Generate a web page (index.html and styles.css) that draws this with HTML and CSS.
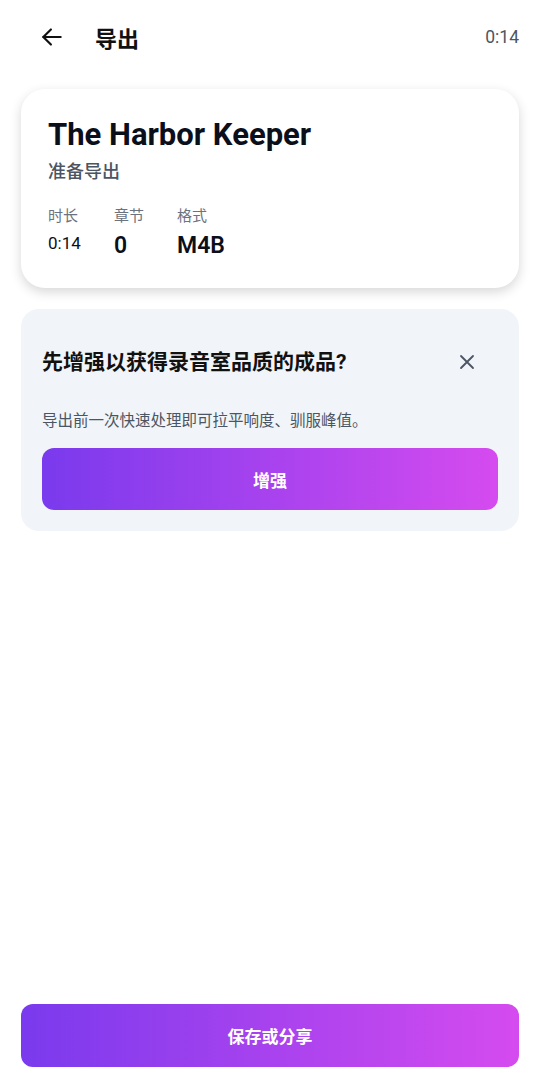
FILE: index.html
```html
<!DOCTYPE html>
<html lang="zh">
<head>
  <meta charset="UTF-8">
  <title>导出</title>
  <link rel="stylesheet" href="styles.css">
</head>
<body>
  <div class="screen">

    <div class="topbar">
      <button class="back" aria-label="返回">
        <svg width="26" height="26" viewBox="0 0 24 24" fill="none" stroke="#111" stroke-width="2" stroke-linecap="round" stroke-linejoin="round">
          <path d="M20 12H4"/>
          <path d="M11 5l-7 7 7 7"/>
        </svg>
      </button>
      <h1>导出</h1>
      <span class="time">0:14</span>
    </div>

    <div class="card summary">
      <h2>The Harbor Keeper</h2>
      <div class="status">准备导出</div>
      <div class="stats">
        <div class="stat">
          <div class="label">时长</div>
          <div class="value plain">0:14</div>
        </div>
        <div class="stat">
          <div class="label">章节</div>
          <div class="value">0</div>
        </div>
        <div class="stat">
          <div class="label">格式</div>
          <div class="value">M4B</div>
        </div>
      </div>
    </div>

    <div class="card promo">
      <div class="promo-head">
        <h3>先增强以获得录音室品质的成品?</h3>
        <button class="close" aria-label="关闭">
          <svg width="18" height="18" viewBox="0 0 18 18" fill="none" stroke="#4b5563" stroke-width="1.8" stroke-linecap="round">
            <path d="M3 3l12 12M15 3L3 15"/>
          </svg>
        </button>
      </div>
      <p>导出前一次快速处理即可拉平响度、驯服峰值。</p>
      <button class="grad-btn">增强</button>
    </div>

    <div class="spacer"></div>

    <button class="grad-btn big">保存或分享</button>
  </div>
</body>
</html>
```

FILE: styles.css
```css
* {
  box-sizing: border-box;
}

body {
  margin: 0;
  background: #fff;
  font-family: Roboto, "Noto Sans CJK SC", sans-serif;
  color: #0b0f1a;
}

.screen {
  width: 540px;
  height: 1075px;
  padding: 0 21px 8px;
  display: flex;
  flex-direction: column;
}

.topbar {
  height: 76px;
  display: flex;
  align-items: center;
}

.back {
  background: none;
  border: none;
  padding: 0;
  margin: -2px 0 0 18px;
  width: 26px;
  height: 26px;
  display: flex;
}

.topbar h1 {
  margin: -2px 0 0 30px;
  font-size: 22px;
  font-weight: 700;
  color: #111;
}

.time {
  margin: -2px 0 0 auto;
  font-size: 17.5px;
  color: #4b5563;
}

.card {
  border-radius: 24px;
}

.summary {
  margin-top: 13px;
  background: #fff;
  padding: 27px 27px 28px;
  box-shadow: 0 4px 12px rgba(0, 0, 0, 0.16);
}

.summary h2 {
  margin: 0;
  font-size: 31px;
  font-weight: 700;
  line-height: 38px;
}

.status {
  margin-top: 6px;
  font-size: 18px;
  line-height: 24px;
  color: #4b5563;
  font-weight: 500;
}

.stats {
  display: grid;
  grid-template-columns: 66px 63px auto;
  margin-top: 22px;
}

.label {
  font-size: 15px;
  color: #6b7280;
  line-height: 20px;
}

.value {
  margin-top: 6px;
  font-size: 23px;
  font-weight: 600;
  line-height: 28px;
}

.value.plain {
  font-size: 17px;
  font-weight: 400;
  line-height: 22px;
}

.promo {
  margin-top: 21px;
  background: #f1f4f8;
  border-radius: 18px;
  padding: 39px 21px 21px;
}

.promo-head {
  display: flex;
  align-items: center;
}

.promo h3 {
  margin: 0;
  font-size: 21px;
  line-height: 28px;
  font-weight: 700;
  color: #111;
}

.close {
  margin-left: auto;
  margin-right: 22px;
  background: none;
  border: none;
  padding: 0;
  display: flex;
}

.promo p {
  margin: 34px 0 16px;
  font-size: 15.5px;
  line-height: 22px;
  color: #4b5563;
}

.grad-btn {
  width: 100%;
  height: 62px;
  border: none;
  border-radius: 12px;
  background: linear-gradient(90deg, #7a3aed, #d54bef);
  color: #fff;
  font-family: inherit;
  font-size: 17px;
  font-weight: 700;
}

.spacer {
  flex: 1;
}

.grad-btn.big {
  height: 63px;
}
```
